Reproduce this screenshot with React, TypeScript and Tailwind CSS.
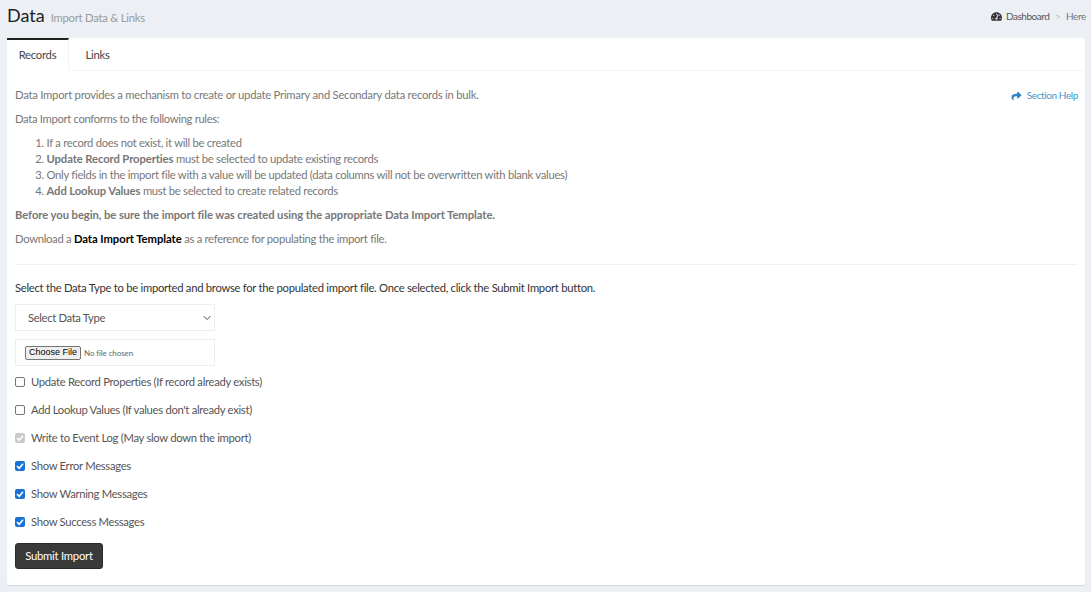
import { FaShare, FaTachometerAlt } from 'react-icons/fa';
import { ChevronDown } from 'lucide-react';

const options = [
  { label: 'Update Record Properties (If record already exists)', state: 'off' },
  { label: "Add Lookup Values (If values don't already exist)", state: 'off' },
  { label: 'Write to Event Log (May slow down the import)', state: 'disabled' },
  { label: 'Show Error Messages', state: 'on' },
  { label: 'Show Warning Messages', state: 'on' },
  { label: 'Show Success Messages', state: 'on' },
];

const Check = ({ state }: { state: string }) => {
  if (state === 'off') {
    return <span className="h-[10px] w-[10px] shrink-0 rounded-[2px] border border-[#767676] bg-white" />;
  }
  return (
    <span
      className={`flex h-[10px] w-[10px] shrink-0 items-center justify-center rounded-[2px] ${
        state === 'on' ? 'bg-[#1a73d4]' : 'bg-[#c9c9c9]'
      }`}
    >
      <svg viewBox="0 0 10 10" className="h-[10px] w-[10px]" fill="none" stroke="white" strokeWidth="1.6">
        <path d="M2 5.2 4.2 7.3 8 2.8" />
      </svg>
    </span>
  );
};

export default function App() {
  return (
    <div className="h-[592px] w-[1091px] overflow-hidden bg-[#ecf0f5] font-['Lato',sans-serif] text-[11.25px] tracking-[-0.24px] text-[#777]">
      {/* Header */}
      <div className="mb-[5px] flex h-[33px] items-center justify-between pl-[7px] pr-[5px]">
        <div className="flex items-baseline gap-[6px]">
          <h1 className="text-[18px] leading-none tracking-normal text-[#222]">Data</h1>
          <span className="text-[#9a9a9a]">Import Data &amp; Links</span>
        </div>
        <div className="flex items-center text-[10px] tracking-[-0.35px] text-[#555]">
          <FaTachometerAlt className="mr-[4px] h-[11px] w-[11px] text-[#333]" />
          <span className="tracking-[-0.45px]">Dashboard</span>
          <span className="mx-[5.5px] text-[#bbb]">&gt;</span>
          <span className="text-[#777]">Here</span>
        </div>
      </div>

      {/* Card */}
      <div className="ml-[7px] h-[547px] w-[1078px] rounded-[2px] bg-white shadow-[0_1px_1px_rgba(0,0,0,0.1)]">
        <div className="flex h-[33px] border-b border-[#f4f4f4]">
          <div className="flex h-[33px] w-[62px] items-center justify-center border-r border-t-2 border-r-[#f4f4f4] border-t-[#222] bg-white text-[#444]">
            Records
          </div>
          <div className="flex w-[57px] items-center justify-center pt-[2px] text-[#444]">Links</div>
        </div>

        <div className="px-2 pt-[16px]">
          <div className="flex h-[17px] items-center justify-between">
            <p>Data Import provides a mechanism to create or update Primary and Secondary data records in bulk.</p>
            <span className="mr-[-1px] flex items-center gap-[5px] text-[10px] tracking-[-0.4px] text-[#4a94c4]">
              <FaShare className="h-[10px] w-[11px] text-[#2e86c1]" />
              Section Help
            </span>
          </div>
          <p className="mt-[7px] h-4 leading-4 tracking-[-0.33px]">Data Import conforms to the following rules:</p>
          <ol className="mt-2 list-decimal pl-[31.5px] leading-4 tracking-[-0.28px]">
            <li>If a record does not exist, it will be created</li>
            <li>
              <b className="tracking-[-0.1px]">Update Record Properties</b> must be selected to update existing records
            </li>
            <li>Only fields in the import file with a value will be updated (data columns will not be overwritten with blank values)</li>
            <li>
              <b className="tracking-[-0.1px]">Add Lookup Values</b> must be selected to create related records
            </li>
          </ol>
          <p className="mt-2 h-4 font-bold leading-4 tracking-[-0.07px]">
            Before you begin, be sure the import file was created using the appropriate Data Import Template.
          </p>
          <p className="mt-2 h-4 leading-4 tracking-[-0.3px]">
            Download a <b className="tracking-[-0.05px] text-black">Data Import Template</b> as a reference for populating the import file.
          </p>
          <hr className="mt-[17px] border-[#f1f1f1]" />
          <p className="mt-[15px] h-4 leading-4 tracking-[-0.28px] text-[#333]">
            Select the Data Type to be imported and browse for the populated import file. Once selected, click the Submit Import button.
          </p>

          <div className="mt-2 flex h-[27px] w-[200px] items-center justify-between border border-[#eee] pl-[12px] pr-[1px] pt-[1px] tracking-[-0.35px] text-[#555]">
            Select Data Type
            <ChevronDown className="h-[12px] w-[12px] text-[#444]" strokeWidth={2} />
          </div>
          <div className="mt-2 flex h-[27px] w-[200px] items-center border border-[#eee] pl-[9px]">
            <span className="flex h-[14px] w-[56px] items-center justify-center rounded-[2px] border border-[#767676] bg-[#efefef] font-['Liberation_Sans',sans-serif] text-[9px] tracking-normal text-black">
              Choose File
            </span>
            <span className="ml-[3px] text-[8px] tracking-[-0.1px] text-[#666]">No file chosen</span>
          </div>

          <div className="mt-[2px] flex flex-col">
            {options.map((o) => (
              <div key={o.label} className="flex h-[28px] items-center gap-[6px] tracking-[-0.3px] text-[#555]">
                <Check state={o.state} />
                <span>{o.label}</span>
              </div>
            ))}
          </div>

          <button className="mt-[7px] h-[26px] w-[88px] rounded-[3px] border border-[#2a2a2a] bg-[#3a3a3a] text-white">
            Submit Import
          </button>
        </div>
      </div>
    </div>
  );
}
